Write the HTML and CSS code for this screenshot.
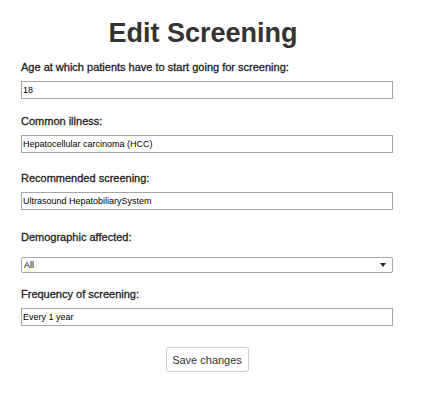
FILE: index.html
```html
<!DOCTYPE html>
<html lang="en">
<head>
<meta charset="utf-8">
<title>Edit Screening</title>
<link rel="stylesheet" href="styles.css">
</head>
<body>
<form class="form">
  <h1 class="title">Edit Screening</h1>
  <div class="field field--a">
    <label class="label" for="age">Age at which patients have to start going for screening:</label>
    <input class="input" id="age" type="text" value="18">
  </div>
  <div class="field field--b">
    <label class="label" for="illness">Common illness:</label>
    <input class="input" id="illness" type="text" value="Hepatocellular carcinoma (HCC)">
  </div>
  <div class="field field--c">
    <label class="label" for="rec">Recommended screening:</label>
    <input class="input" id="rec" type="text" value="Ultrasound HepatobiliarySystem">
  </div>
  <div class="field field--d">
    <label class="label label--select" for="demo">Demographic affected:</label>
    <div class="select-wrap">
      <select class="select" id="demo">
        <option>All</option>
      </select>
    </div>
  </div>
  <div class="field field--e">
    <label class="label" for="freq">Frequency of screening:</label>
    <input class="input" id="freq" type="text" value="Every 1 year">
  </div>
  <div class="actions">
    <button class="btn" type="button">Save changes</button>
  </div>
</form>
</body>
</html>
```
FILE: styles.css
```css
html, body {
  margin: 0;
  padding: 0;
  background: #fff;
}
body {
  font-family: "Liberation Sans", Arial, sans-serif;
  color: #333;
}
.form {
  width: 372px;
  margin: 0 0 0 21px;
  display: flex;
  flex-direction: column;
}
.title {
  margin: 16px 0 10px;
  font-size: 27px;
  line-height: 35px;
  font-weight: bold;
  text-align: center;
  color: #333;
  padding-right: 8px;
}
.field {
  display: flex;
  flex-direction: column;
}
.field--a { margin-bottom: 16px; }
.field--b { margin-bottom: 19px; }
.field--c { margin-bottom: 21px; }
.field--d { margin-bottom: 15px; }
.field--e { margin-bottom: 21px; }
.label {
  display: block;
  font-size: 11px;
  line-height: 13px;
  color: #222;
  -webkit-text-stroke: 0.3px #222;
  margin-bottom: 7px;
}
.label--select { margin-bottom: 13px; }
.input {
  box-sizing: border-box;
  width: 372px;
  height: 18px;
  margin: 0;
  padding: 0 1px;
  border: 1px solid #a6a6a6;
  border-radius: 0;
  font-family: "Liberation Sans", Arial, sans-serif;
  font-size: 9px;
  color: #000;
  background: #fff;
  outline: none;
}
.select-wrap {
  position: relative;
  width: 372px;
}
.select {
  -webkit-appearance: none;
  appearance: none;
  box-sizing: border-box;
  display: block;
  width: 372px;
  height: 16px;
  margin: 0;
  padding: 0 2px;
  border: 1px solid #a6a6a6;
  border-radius: 2px;
  font-family: "Liberation Sans", Arial, sans-serif;
  font-size: 9px;
  color: #000;
  background: #fff;
}
.select-wrap::after {
  content: "";
  position: absolute;
  right: 7px;
  top: 6px;
  border-left: 3px solid transparent;
  border-right: 3px solid transparent;
  border-top: 4px solid #222;
  pointer-events: none;
}
.actions {
  display: flex;
  justify-content: center;
}
.btn {
  box-sizing: border-box;
  width: 83px;
  height: 25px;
  padding: 0;
  border: 1px solid #ccc;
  border-radius: 3px;
  background: #fff;
  color: #333;
  font-family: "Liberation Sans", Arial, sans-serif;
  font-size: 11px;
}
```
